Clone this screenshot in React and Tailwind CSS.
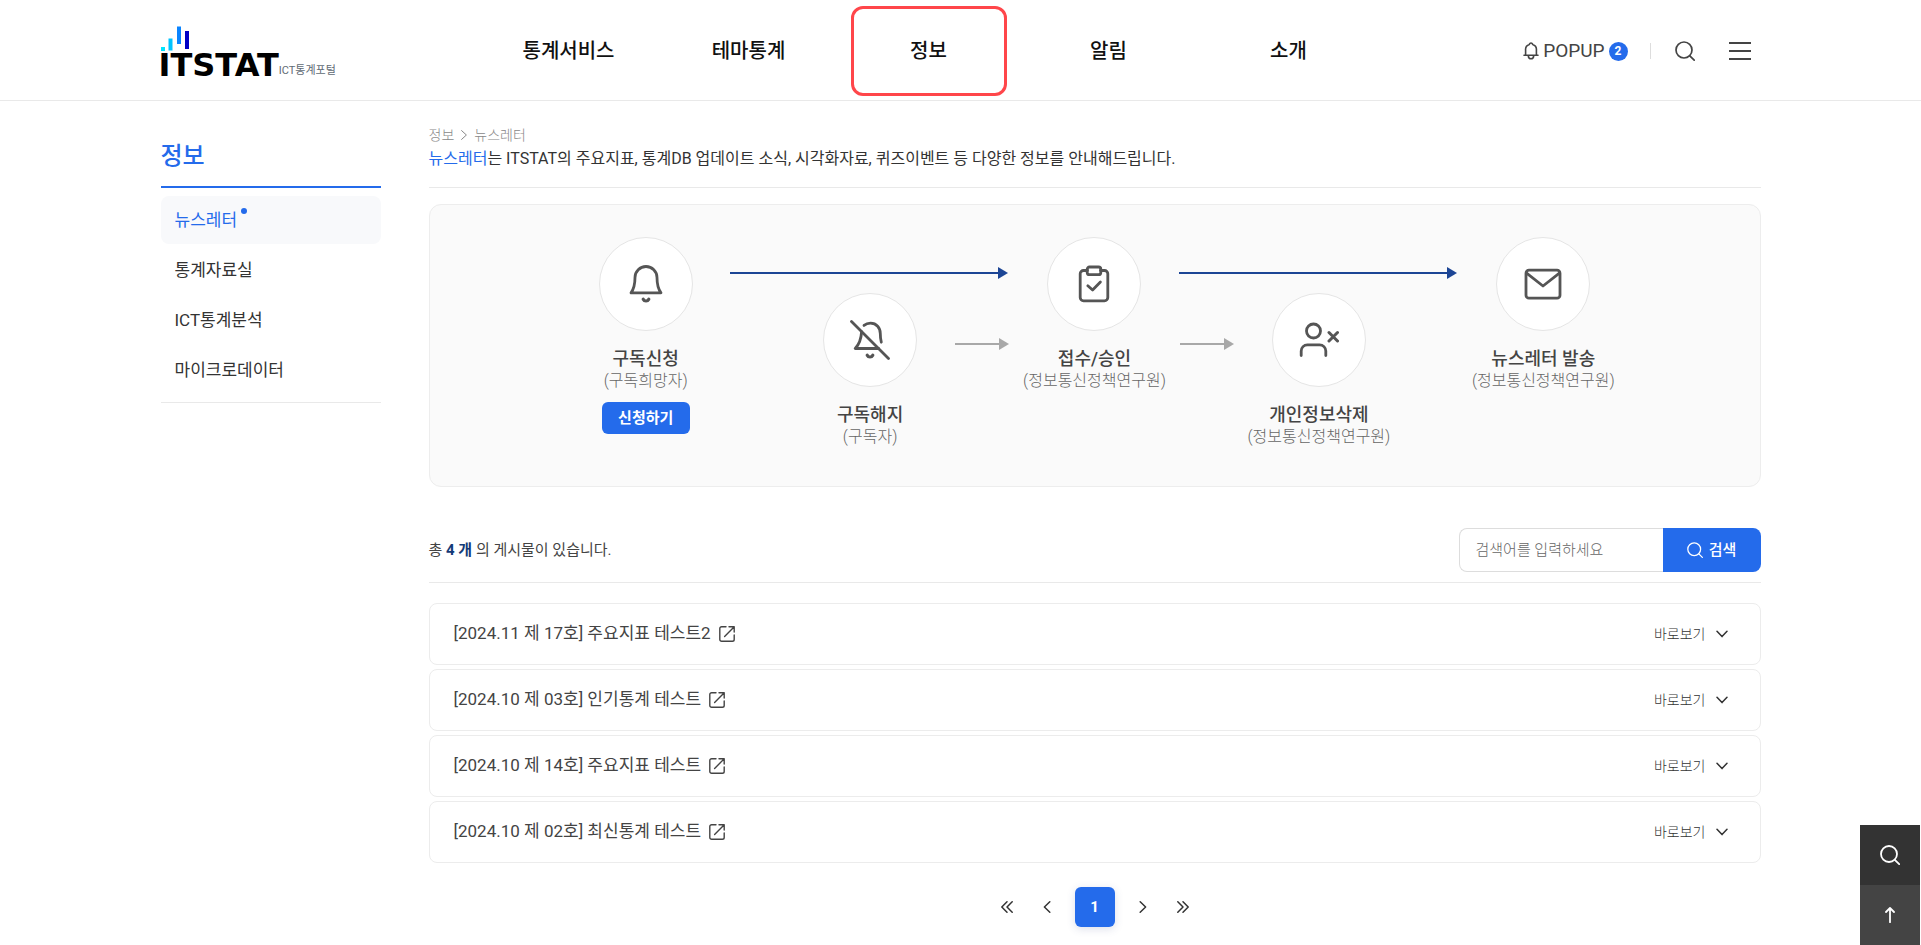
import React from "react";

const NAV = ["통계서비스", "테마통계", "정보", "알림", "소개"];

const SIDE_MENU = [
  { label: "뉴스레터", active: true },
  { label: "통계자료실" },
  { label: "ICT통계분석" },
  { label: "마이크로데이터" },
];

const POSTS = [
  "[2024.11 제 17호] 주요지표 테스트2",
  "[2024.10 제 03호] 인기통계 테스트",
  "[2024.10 제 14호] 주요지표 테스트",
  "[2024.10 제 02호] 최신통계 테스트",
];

function Svg({ className, children, strokeWidth = 1.5, viewBox = "0 0 24 24", cap = "round" }) {
  return (
    <svg
      className={className}
      viewBox={viewBox}
      fill="none"
      stroke="currentColor"
      strokeWidth={strokeWidth}
      strokeLinecap={cap}
      strokeLinejoin="round"
      aria-hidden="true"
    >
      {children}
    </svg>
  );
}

function SearchIcon({ className, strokeWidth = 1.7 }) {
  return (
    <Svg className={className} viewBox="0 0 20 20" strokeWidth={strokeWidth}>
      <circle cx="9" cy="9" r="8" />
      <path d="M14.8 14.8 19.2 19.2" />
    </Svg>
  );
}

function BellSmall({ className }) {
  return (
    <Svg className={className} viewBox="0 0 16 18" strokeWidth={1.6}>
      <path d="M1 13.3h14M2.6 13.2V8a5.4 5.4 0 0 1 3.700-5.600C6.700 1.400 7.200 1 8 1s1.300.4 1.700 1.400A5.400 5.400 0 0 1 13.400 8v5.200" />
      <path d="M5.300 13.800c.2 2 1.300 3 2.700 3s2.500-1 2.700-3" />
    </Svg>
  );
}

function BellIcon() {
  return (
    <Svg className="size-10" viewBox="0 0 40 40" strokeWidth={2.8}>
      <path d="M5 28.800H35C32.500 25.500 31 21.500 31 13.500A11 11 0 0 0 9 13.500C9 21.500 7.500 25.500 5 28.800Z" />
      <path d="M17.200 35.200c.6 1.200 1.500 1.800 2.800 1.800s2.200-.6 2.800-1.800" strokeWidth="3.2" />
    </Svg>
  );
}

function BellOffIcon() {
  return (
    <Svg className="size-10" viewBox="0 0 40 40" strokeWidth={2.8}>
      <path d="M1.500 1.500 38.500 38.500" />
      <path d="M11.600 11.600C11.200 19 9 24.500 5.200 28.500H28.500" />
      <path d="M14 5.400C16 3.800 18 3.200 20.500 3.200c6 0 9.800 4.600 9.800 10.200 0 3.200.3 6 1 8.800" />
      <path d="M17.200 35.200c.6 1.200 1.500 1.800 2.800 1.800s2.200-.6 2.800-1.800" strokeWidth="3.2" />
    </Svg>
  );
}

function ClipboardIcon() {
  return (
    <Svg className="size-10" viewBox="0 0 40 40" strokeWidth={2.8}>
      <path d="M13.500 6.500H9.500A3.300 3.300 0 0 0 6.200 9.800V33.500A3.300 3.300 0 0 0 9.500 36.800H30.500A3.300 3.300 0 0 0 33.800 33.500V9.800A3.300 3.300 0 0 0 30.500 6.500H26.500" />
      <rect x="13.200" y="3" width="13.600" height="7.600" rx="2.200" />
      <path d="M13.800 21.800 18.600 26 26.400 18" />
    </Svg>
  );
}

function UserDeleteIcon() {
  return (
    <Svg className="size-10" viewBox="0 0 40 40" strokeWidth={2.8}>
      <circle cx="14.500" cy="11" r="7" />
      <path d="M2.200 35.500V31A6.200 6.200 0 0 1 8.400 24.800H20.600A6.200 6.200 0 0 1 26.800 31V35.500" />
      <path d="M30 12.500 38.500 21M38.500 12.500 30 21" strokeWidth="3" />
    </Svg>
  );
}

function MailIcon() {
  return (
    <Svg className="size-10" viewBox="0 0 40 40" strokeWidth={2.8}>
      <rect x="3" y="6.200" width="34" height="28" rx="3" />
      <path d="M3.600 9.200 20 22 36.400 9.200" />
    </Svg>
  );
}

function Arrow({ className }) {
  return (
    <div className={`flex h-3 items-center ${className}`} aria-hidden="true">
      <span className="h-[2px] grow bg-current" />
      <svg className="h-3 w-2.5" viewBox="0 0 10 12" fill="currentColor">
        <path d="M0 0 10 6 0 12Z" />
      </svg>
    </div>
  );
}

function Step({ className, icon, title, sub, children }) {
  return (
    <div className={`row-start-1 flex flex-col items-center text-center ${className}`}>
      <div className="flex size-[94px] items-center justify-center rounded-full border border-[#e5e5e5] bg-white text-[#555]">
        {icon}
      </div>
      <strong className="mt-4 text-[18px] leading-6 font-medium whitespace-nowrap text-[#444]">{title}</strong>
      <span className="text-[16px] leading-5 font-light whitespace-nowrap text-[#666]">({sub})</span>
      {children}
    </div>
  );
}

function Logo() {
  return (
    <a href="#home" aria-label="ITSTAT ICT통계포털" className="flex flex-col gap-[2px]">
      <svg className="h-[25px] w-7" viewBox="0 0 28 25" aria-hidden="true">
        <rect x="0" y="21" width="4" height="4" fill="#00e5ff" />
        <rect x="7.500" y="12.500" width="4" height="12" fill="#00c3ff" />
        <rect x="16" y="0.500" width="4" height="17.500" fill="#0a84ff" />
        <rect x="24" y="5" width="4" height="18" fill="#0000c4" />
      </svg>
      <span className="flex items-end">
        <span className="-ml-0.5 font-['DejaVu_Sans'] text-[32px] leading-6 font-bold text-black">ITSTAT</span>
        <span className="text-[11px] leading-3 text-[#5f6b75]">ICT통계포털</span>
      </span>
    </a>
  );
}

function Header() {
  return (
    <header className="border-b border-[#e9e9e9]">
      <div className="mx-auto grid h-[100px] max-w-[1600px] grid-cols-[318px_900px_1fr] items-center pt-0.5">
        <Logo />
        <nav className="grid grid-cols-5 place-items-center" aria-label="주 메뉴">
          {NAV.map((label) => (
            <a
              key={label}
              href="#menu"
              className={`flex h-[90px] w-[156px] items-center justify-center rounded-xl text-[20px] font-medium text-[#111] ${
                label === "정보" ? "border-3 border-[#ff464a]" : ""
              }`}
            >
              {label}
            </a>
          ))}
        </nav>
        <div className="flex items-center justify-end pr-2.5 text-[#444]">
          <button type="button" className="flex items-center gap-1 text-[19px] leading-6">
            <BellSmall className="h-[18px] w-4" />
            POPUP
            <span className="flex size-[19px] items-center justify-center rounded-full bg-[#246beb] text-[12px] font-bold text-white">
              2
            </span>
          </button>
          <span className="ml-[22px] h-4 w-px bg-[#ddd]" />
          <button type="button" aria-label="검색" className="ml-6">
            <SearchIcon className="size-5" />
          </button>
          <button type="button" aria-label="전체 메뉴" className="ml-[34px]">
            <Svg className="h-5 w-[22px]" viewBox="0 0 22 20" strokeWidth={1.8} cap="butt">
              <path d="M0 2H22M0 10H22M0 18H22" />
            </Svg>
          </button>
        </div>
      </div>
    </header>
  );
}

function Sidebar() {
  return (
    <aside className="w-[220px] shrink-0 pt-[37px]">
      <h2 className="h-[50px] border-b-2 border-[#246beb] text-[24px] leading-9 font-medium text-[#246beb]">정보</h2>
      <ul className="mt-2 flex flex-col gap-0.5 border-b border-[#e9e9e9] pb-2">
        {SIDE_MENU.map(({ label, active }) => (
          <li key={label}>
            <a
              href="#side"
              className={`flex h-12 items-center rounded-lg px-[14px] pt-0.5 text-[17px] ${
                active ? "bg-[#f8f9fb] text-[#246beb]" : "text-[#333]"
              }`}
            >
              {label}
              {active && <span className="mb-5 ml-1 size-1.5 rounded-full bg-[#246beb]" />}
            </a>
          </li>
        ))}
      </ul>
    </aside>
  );
}

function Process() {
  return (
    <section className="mt-4 rounded-xl border border-[#ededed] bg-[#fafafa] pt-8 pb-[39px]">
      <div className="mx-auto grid max-w-[1122px] grid-cols-10">
        <Step className="col-span-2 col-start-1" icon={<BellIcon />} title="구독신청" sub="구독희망자">
          <button type="button" className="mt-[11px] h-8 w-[88px] rounded-md bg-[#246beb] text-[15px] font-bold text-white">
            신청하기
          </button>
        </Step>
        <Arrow className="col-span-2 col-start-3 row-start-1 -mr-[26px] -ml-7 mt-[30px] text-[#1c4595]" />
        <Step className="col-span-2 col-start-3 pt-14" icon={<BellOffIcon />} title="구독해지" sub="구독자" />
        <Arrow className="col-span-2 col-start-4 row-start-1 mt-[101px] w-[54px] justify-self-center text-[#a8a8a8]" />
        <Step className="col-span-2 col-start-5" icon={<ClipboardIcon />} title="접수/승인" sub="정보통신정책연구원" />
        <Arrow className="col-span-2 col-start-7 row-start-1 -mr-[26px] -ml-7 mt-[30px] text-[#1c4595]" />
        <Arrow className="col-span-2 col-start-6 row-start-1 mt-[101px] w-[54px] justify-self-center text-[#a8a8a8]" />
        <Step className="col-span-2 col-start-7 pt-14" icon={<UserDeleteIcon />} title="개인정보삭제" sub="정보통신정책연구원" />
        <Step className="col-span-2 col-start-9" icon={<MailIcon />} title="뉴스레터 발송" sub="정보통신정책연구원" />
      </div>
    </section>
  );
}

function ListBar() {
  return (
    <div className="mt-[41px] flex items-center justify-between border-b border-[#e9e9e9] pb-2.5">
      <p className="text-[15px] text-[#444]">
        총 <strong className="font-bold text-[#133a77]">4 개</strong> 의 게시물이 있습니다.
      </p>
      <form className="flex h-11" onSubmit={(e) => e.preventDefault()}>
        <input
          type="text"
          aria-label="검색어"
          placeholder="검색어를 입력하세요"
          className="w-[204px] rounded-l-lg border border-r-0 border-[#ddd] px-4 text-[15px] font-light outline-none placeholder:text-[#666]"
        />
        <button
          type="submit"
          className="flex w-[98px] items-center justify-center gap-1.5 rounded-r-lg bg-[#246beb] text-[15px] font-medium text-white"
        >
          <SearchIcon className="size-4" strokeWidth={1.6} />
          검색
        </button>
      </form>
    </div>
  );
}

function PostList() {
  return (
    <ul className="mt-5 flex flex-col gap-1">
      {POSTS.map((title) => (
        <li key={title} className="flex h-[62px] items-center justify-between rounded-lg border border-[#ececec] pr-8 pl-6">
          <a href="#post" className="flex items-center gap-2 text-[17px] text-[#444]">
            {title}
            <Svg className="size-4" viewBox="0 0 16 16" strokeWidth={1.4}>
              <path d="M7 .8H2.600A1.800 1.800 0 0 0 .8 2.600V13.400A1.800 1.800 0 0 0 2.600 15.200H13.400A1.800 1.800 0 0 0 15.200 13.400V9" />
              <path d="M10 .8H15.200V6M15 1 5.600 10.400" />
            </Svg>
          </a>
          <button type="button" className="flex items-center gap-2.5 text-[14px] font-light text-[#333]">
            바로보기
            <Svg className="h-2 w-3" viewBox="0 0 12 8" strokeWidth={1.5}>
              <path d="M1 1.200 6 6.600 11 1.200" />
            </Svg>
          </button>
        </li>
      ))}
    </ul>
  );
}

function PageButton({ label, children }) {
  return (
    <button type="button" aria-label={label} className="flex size-10 items-center justify-center text-[#333]">
      <Svg className="size-3" viewBox="0 0 12 12" strokeWidth={1.5}>
        {children}
      </Svg>
    </button>
  );
}

function Pagination() {
  return (
    <nav className="mt-6 flex items-center justify-center pb-[18px]" aria-label="페이지">
      <PageButton label="처음">
        <path d="M6 .8.8 6 6 11.200M11.200.8 6 6 11.200 11.200" />
      </PageButton>
      <PageButton label="이전">
        <path d="M8.800.8 3.400 6 8.800 11.200" />
      </PageButton>
      <button
        type="button"
        aria-current="page"
        className="mx-2 size-10 rounded-md bg-[#246beb] text-[15px] font-bold text-white shadow-[0_2px_8px_rgba(60,80,140,0.18)]"
      >
        1
      </button>
      <PageButton label="다음">
        <path d="M3.200.8 8.600 6 3.200 11.200" />
      </PageButton>
      <PageButton label="마지막">
        <path d="M.8.8 6 6 .8 11.200M6 .8 11.200 6 6 11.200" />
      </PageButton>
    </nav>
  );
}

export default function App() {
  return (
    <div className="bg-white font-[Roboto,'Noto_Sans_CJK_KR',sans-serif]">
      <Header />
      <div className="mx-auto flex max-w-[1600px] gap-12">
        <Sidebar />
        <main className="min-w-0 grow pt-[22px]">
          <nav className="flex items-center gap-[7px] text-[14px] leading-6 font-light text-[#888]" aria-label="현재 위치">
            <a href="#info">정보</a>
            <Svg className="h-2.5 w-1.5" viewBox="0 0 6 10" strokeWidth={1}>
              <path d="M.6.6 5.400 5 .6 9.400" />
            </Svg>
            <a href="#newsletter">뉴스레터</a>
          </nav>
          <p className="border-b border-[#e9e9e9] pb-4 text-[16px] leading-6 text-[#333]">
            <span className="text-[#246beb]">뉴스레터</span>는 ITSTAT의 주요지표, 통계DB 업데이트 소식, 시각화자료,
            퀴즈이벤트 등 다양한 정보를 안내해드립니다.
          </p>
          <Process />
          <ListBar />
          <PostList />
          <Pagination />
        </main>
      </div>
      <div className="fixed right-px bottom-0 flex w-[60px] flex-col text-white">
        <button type="button" aria-label="검색 열기" className="flex h-[60px] items-center justify-center bg-[#333]">
          <SearchIcon className="size-5" strokeWidth={1.8} />
        </button>
        <button type="button" aria-label="맨 위로" className="flex h-[60px] items-center justify-center bg-[#444]">
          <Svg className="h-4 w-2.5" viewBox="0 0 10 16" strokeWidth={1.8}>
            <path d="M5 15.200V1M1 5 5 1 9 5" />
          </Svg>
        </button>
      </div>
    </div>
  );
}
